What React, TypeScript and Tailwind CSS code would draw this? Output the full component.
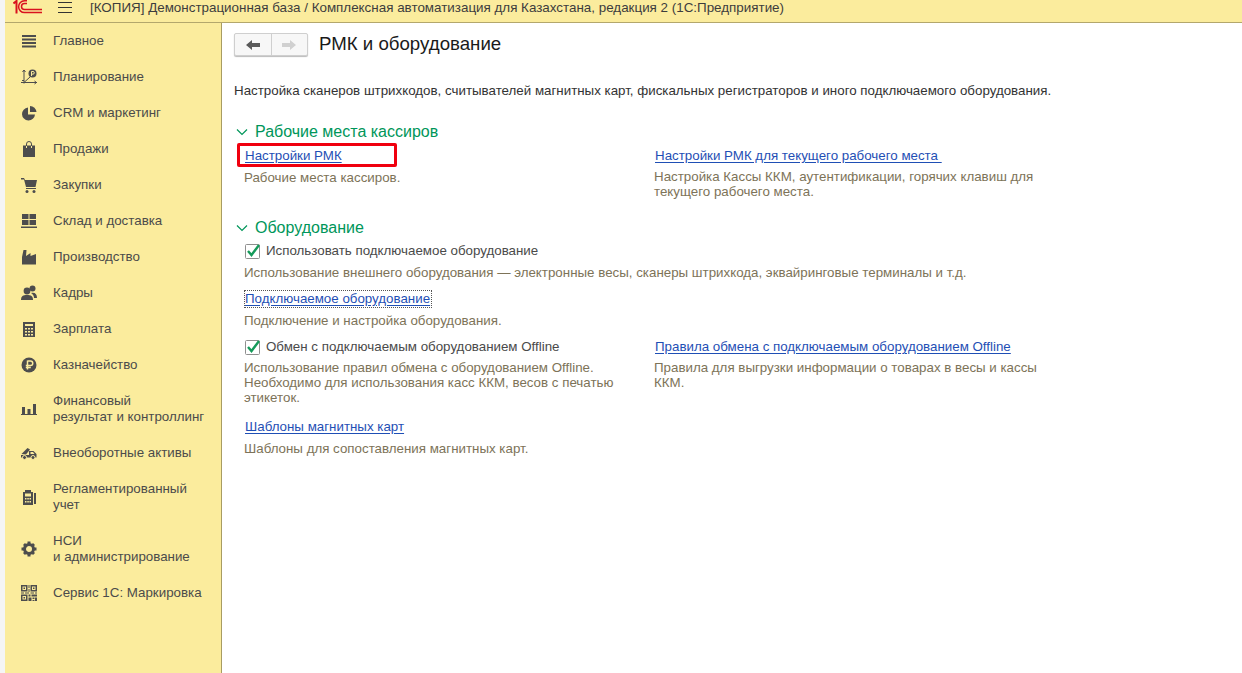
import type { ReactNode } from 'react'

const font = "font-['Liberation_Sans',Arial,sans-serif]"

const Svg = ({ children }: { children: ReactNode }) => (
  <svg width="16" height="16" viewBox="0 0 16 16" fill="#4d4d4d">{children}</svg>
)

const icons: Record<string, ReactNode> = {
  main: <Svg><path d="M1 2h14v2H1zM1 5.500h14v2H1zM1 9h14v2H1zM1 12.500h14v2H1z" /></Svg>,
  plan: <Svg><path d="M3 1v13.500M0 13.500h16M3 13.500l6-5.500M1.500 3L3 1l1.500 2M1 11.500h2M13.500 12l2 1.500-2 1.500" fill="none" stroke="#4d4d4d" /><circle cx="11.500" cy="4.500" r="4" /><path d="M10.500 7V2.500h1.500a1.200 1.200 0 0 1 0 2.600h-2" fill="none" stroke="#fbec9d" /></Svg>,
  crm: <Svg><path d="M7 2.500A6.500 6.500 0 1 0 14 9.500H7z" /><path d="M9 1v6h6.500A6.500 6.500 0 0 0 9 1z" /></Svg>,
  sale: <Svg><path d="M2 4.500h12V16H2z" /><path d="M5.500 7V3a2.500 2.500 0 0 1 5 0v4" fill="none" stroke="#4d4d4d" /><path d="M5.500 5V7M10.500 5V7" stroke="#fbec9d" /></Svg>,
  buy: <Svg><path d="M0 1h3l1 2h12l-1.500 7H5L3 2.500H0z" /><path d="M5 11h10v1H5z" /><circle cx="6" cy="14.500" r="1.500" /><circle cx="13" cy="14.500" r="1.500" /></Svg>,
  stock: <Svg><path d="M1 1h6.500v5H1zM8.500 1H15v5H8.500zM1 7h6.500v5H1zM8.500 7H15v5H8.500zM0 13.500h16v1.500H0z" /></Svg>,
  prod: <Svg><path d="M1 15.500V8l1.500-7H5.500L5 7l4.500-3v3l5.500-2v10.500z" /></Svg>,
  hr: <Svg><circle cx="6" cy="6" r="3.400" /><path d="M0 15c0-4 2-5 6-5s6 1 6 5z" /><circle cx="11.500" cy="3.500" r="3" /><path d="M10 8c4-1 6 1 6 5h-3c0-2-1-4-3-5z" /></Svg>,
  calc: <Svg><path fillRule="evenodd" d="M2 1h12v15H2zM4 3v2h8V3zM4 7v1.500h2V7zM7 7v1.500h2V7zM10 7v1.500h2V7zM4 10v1.500h2V10zM7 10v1.500h2V10zM10 10v1.500h2V10zM4 13v1.500h2V13zM7 13v1.500h2V13zM10 13v1.500h2V13z" /></Svg>,
  rub: <Svg><circle cx="8" cy="8" r="7.500" /><path d="M6.500 3.500v9M6.500 4h3a2.200 2.200 0 0 1 0 4.500h-3M4.800 8.500h1.700M4.800 10.500h5" fill="none" stroke="#fbec9d" strokeWidth="1.500" /></Svg>,
  chart: <Svg><path d="M1 6h3v7H1zM6.500 8h3v5h-3zM12 3h3v10h-3zM0 13h16v1H0z" /></Svg>,
  asset: <Svg><path d="M0.500 9L6.500 3l2.500 1.500L5 9.500z" /><path d="M0 10h8V6h4.500l3 3v3.500H0z" /><path d="M9.500 7h2.500l1.500 2h-4z" fill="#fbec9d" /><circle cx="3.500" cy="12.500" r="2" stroke="#fbec9d" /><circle cx="12" cy="12.500" r="2" stroke="#fbec9d" /></Svg>,
  reg: <Svg><path fillRule="evenodd" d="M2 3h10v13H2zM4 4.500v3h6v-3zM4 9v1.500h1.500V9zM6.300 9v1.500h1.500V9zM8.500 9v1.500H10V9zM4 12v1.500h1.500V12zM6.300 12v1.500h1.500V12zM8.500 12v1.500H10V12z" /><path d="M4 1h6v2H4zM13 4h2v11h-2z" /></Svg>,
  gear: <Svg><circle cx="8" cy="8" r="4.500" fill="none" stroke="#4d4d4d" strokeWidth="3" /><path d="M6.500 0.500h3v3h-3zM6.500 12.500h3v3h-3zM0.500 6.500h3v3h-3zM12.500 6.500h3v3h-3z" /><path d="M2 4l2-2 2 2-2 2zM10 4l2-2 2 2-2 2zM2 12l2-2 2 2-2 2zM10 12l2-2 2 2-2 2z" /></Svg>,
  qr: <Svg><path fillRule="evenodd" d="M0 0h6.500v6.500H0zM1.500 1.500v3.500H5V1.500zM9.500 0H16v6.500H9.500zM11 1.500v3.500h3.500V1.500zM0 9.500h6.500V16H0zM1.500 11v3.500H5V11z" /><path d="M2.500 2.500h1.500V4H2.500zM12 2.500h1.500V4H12zM2.500 12h1.500v1.500H2.500zM7.500 0h1v3h-1zM7.500 4h1v3h-1zM0 7.500h3v1H0zM4 7.500h4v1H4zM9.500 7.500H13v1H9.500zM14 7.500h2v1h-2zM7.500 9.500h2v2h-2zM10.500 9.500H16v2h-5.500zM7.500 12.500h3v3.500h-3zM11.500 12.500h2v1.500h-2zM14 12.500h2V16h-2zM11.500 15h2v1h-2z" /></Svg>,
}

const menu: { icon: string; lines: string[] }[] = [
  { icon: 'main', lines: ['Главное'] },
  { icon: 'plan', lines: ['Планирование'] },
  { icon: 'crm', lines: ['CRM и маркетинг'] },
  { icon: 'sale', lines: ['Продажи'] },
  { icon: 'buy', lines: ['Закупки'] },
  { icon: 'stock', lines: ['Склад и доставка'] },
  { icon: 'prod', lines: ['Производство'] },
  { icon: 'hr', lines: ['Кадры'] },
  { icon: 'calc', lines: ['Зарплата'] },
  { icon: 'rub', lines: ['Казначейство'] },
  { icon: 'chart', lines: ['Финансовый', 'результат и контроллинг'] },
  { icon: 'asset', lines: ['Внеоборотные активы'] },
  { icon: 'reg', lines: ['Регламентированный', 'учет'] },
  { icon: 'gear', lines: ['НСИ', 'и администрирование'] },
  { icon: 'qr', lines: ['Сервис 1С: Маркировка'] },
]

function SideItem({ icon, lines }: { icon: string; lines: string[] }) {
  return (
    <div className={`flex items-center pl-4 ${lines.length > 1 ? 'h-[52px]' : 'h-9'}`}>
      <div className="flex w-[32px] shrink-0">{icons[icon]}</div>
      <div className="text-[13.33px] leading-4 text-[#4b4b4b]">
        {lines.map((l) => (
          <div key={l}>{l}</div>
        ))}
      </div>
    </div>
  )
}

function Group({ title }: { title: string }) {
  return (
    <div className="flex h-5 items-center text-[16px] text-[#00965a]">
      <svg width="12" height="8" viewBox="0 0 12 8" fill="none" stroke="#00965a" strokeWidth="1.200" className="mr-[7px] ml-[2px]">
        <path d="M1 1.500l5 5 5-5" />
      </svg>
      {title}
    </div>
  )
}

function Link({ children }: { children: ReactNode }) {
  return <a className="block w-fit text-[13.33px] leading-4 whitespace-pre text-[#1f4fb5] underline underline-offset-2">{children}</a>
}

function Hint({ children }: { children: ReactNode }) {
  return <div className="text-[13.33px] leading-[15px] text-[#7d7358]">{children}</div>
}

function Check({ label }: { label: string }) {
  return (
    <div className="flex h-4 items-center text-[13.33px] text-[#4a4a4a]">
      <svg width="16" height="16" viewBox="0 0 16 16" className="mr-[5px]">
        <rect x="0.500" y="1.500" width="14" height="14" rx="1" fill="#fff" stroke="#8f8f8f" />
        <path d="M3 8l3.500 4L14 2" fill="none" stroke="#159a5a" strokeWidth="2.400" />
      </svg>
      {label}
    </div>
  )
}

export default function App() {
  return (
    <div className={`${font} flex h-[673px] w-[1242px] flex-col overflow-hidden bg-[#f5f5f5] pl-[5px]`}>
      <header className="flex h-[23px] shrink-0 items-start border-b border-[#b3a76c] bg-[#fbec9d]">
        <svg width="30" height="14" viewBox="0 0 30 14" fill="none" stroke="#d9121f" strokeWidth="1.500" className="ml-[8px]">
          <path d="M0.500 3.500L3.500 1V13.500" strokeWidth="2" />
          <path d="M14 0.800H11.500A5.900 5.900 0 0 0 11.500 12.600H29" />
          <path d="M14 3.500H11.500A3 3 0 0 0 11.500 9.500H29" />
        </svg>
        <svg width="14" height="13" viewBox="0 0 14 13" stroke="#333" className="mt-[1px] ml-[15px]">
          <path d="M0 1.500h14M0 6.500h14M0 11.500h14" />
        </svg>
        <div className="ml-[18px] text-[13.4px] leading-[15px] text-[#3d3d3d]">
          [КОПИЯ] Демонстрационная база / Комплексная автоматизация для Казахстана, редакция 2 (1С:Предприятие)
        </div>
      </header>
      <div className="flex min-h-0 flex-1">
        <aside className="w-[217px] shrink-0 border-r border-[#a89c62] bg-[#fbec9d]">
          {menu.map((m) => (
            <SideItem key={m.icon} icon={m.icon} lines={m.lines} />
          ))}
        </aside>
        <main className="flex-1 bg-white pt-[10px] pl-3">
          <div className="flex h-6 items-start">
            <div className="flex h-[23px] w-[74px] rounded-[2px] border border-[#cfcfcf] bg-[#f7f7f7] shadow-[0_1px_1px_#bbb]">
              <div className="flex w-[37px] items-center justify-center border-r border-[#cfcfcf]">
                <svg width="14" height="10" viewBox="0 0 14 10" fill="#5a5a5a"><path d="M0 5l6-5v3h8v4H6v3z" /></svg>
              </div>
              <div className="flex w-[36px] items-center justify-center">
                <svg width="14" height="10" viewBox="0 0 14 10" fill="#d0d0d0"><path d="M14 5L8 0v3H0v4h8v3z" /></svg>
              </div>
            </div>
            <h1 className="-mt-px ml-[11px] text-[18.67px] leading-6 text-[#1a1a1a]">РМК и оборудование</h1>
          </div>
          <div className="mt-[26px] text-[13.33px] leading-4 text-[#333]">
            Настройка сканеров штрихкодов, считывателей магнитных карт, фискальных регистраторов и иного подключаемого оборудования.
          </div>
          <div className="mt-[23px]">
            <Group title="Рабочие места кассиров" />
          </div>
          <div className="mt-[6px] flex">
            <div className="w-[421px] pl-[11px]">
              <div className="relative">
                <Link>Настройки РМК</Link>
                <div className="absolute top-[-5px] left-[-8px] h-[24px] w-[160px] rounded-[2px] border-[3px] border-[#f0000f]" />
              </div>
              <div className="mt-[6px] -ml-px"><Hint>Рабочие места кассиров.</Hint></div>
            </div>
            <div>
              <Link>Настройки РМК для текущего рабочего места </Link>
              <div className="mt-[5px] -ml-px w-[400px]"><Hint>Настройка Кассы ККМ, аутентификации, горячих клавиш для текущего рабочего места.</Hint></div>
            </div>
          </div>
          <div className="mt-[19px]">
            <Group title="Оборудование" />
          </div>
          <div className="mt-[5px] pl-[11px]">
            <Check label="Использовать подключаемое оборудование" />
            <div className="mt-[6px] -ml-px"><Hint>Использование внешнего оборудования — электронные весы, сканеры штрихкода, эквайринговые терминалы и т.д.</Hint></div>
            <div className="mt-[11px]">
              <div className="h-4 w-fit pr-[1px] outline-1 outline-[#555] outline-dotted"><Link>Подключаемое оборудование</Link></div>
            </div>
            <div className="mt-[6px] -ml-px"><Hint>Подключение и настройка оборудования.</Hint></div>
          </div>
          <div className="mt-[11px] flex">
            <div className="w-[421px] pl-[11px]">
              <Check label="Обмен с подключаемым оборудованием Offline" />
              <div className="mt-[5px] -ml-px w-[380px]"><Hint>Использование правил обмена с оборудованием Offline. Необходимо для использования касс ККМ, весов с печатью этикеток.</Hint></div>
              <div className="mt-[14px]"><Link>Шаблоны магнитных карт</Link></div>
              <div className="mt-[6px] -ml-px"><Hint>Шаблоны для сопоставления магнитных карт.</Hint></div>
            </div>
            <div>
              <Link>Правила обмена с подключаемым оборудованием Offline</Link>
              <div className="mt-[5px] -ml-px w-[400px]"><Hint>Правила для выгрузки информации о товарах в весы и кассы ККМ.</Hint></div>
            </div>
          </div>
        </main>
      </div>
    </div>
  )
}
